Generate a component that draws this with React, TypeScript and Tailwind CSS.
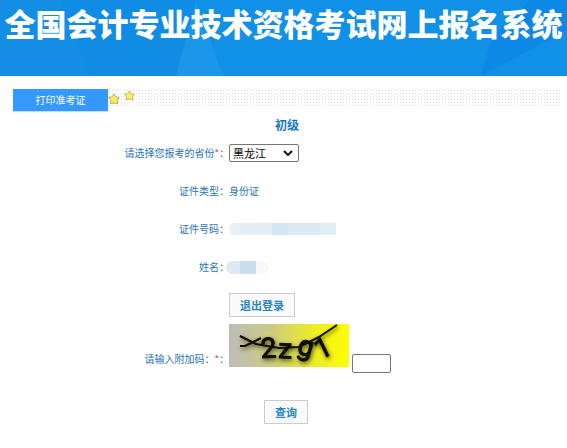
// src/App.tsx
import { useState } from 'react'
import type { ReactNode } from 'react'

interface FormRowProps {
  label: string
  htmlFor?: string
  required?: boolean
  children: ReactNode
}

function FormRow({ label, htmlFor, required = false, children }: FormRowProps) {
  return (
    <div className="flex h-[38px] items-center">
      <label htmlFor={htmlFor} className="w-[40.4%] shrink-0 text-right whitespace-nowrap">
        {label}
        {required && <span className="text-[#f04040]">*</span>}：
      </label>
      {children}
    </div>
  )
}

function Star({ className }: { className: string }) {
  return (
    <svg viewBox="0 0 12 12" className={className} aria-hidden="true">
      <path
        d="M6 1 L7.8 3.8 L11.2 4.6 L9.3 7.4 L9.6 11 L6 9.9 L2.4 11 L2.7 7.4 L0.8 4.6 L4.2 3.8 Z"
        fill="#faee58"
        stroke="#b9b272"
        strokeWidth="1"
        strokeLinejoin="round"
      />
    </svg>
  )
}

function Banner() {
  return (
    <header className="relative h-[76px] bg-[#1190e7]">
      <svg
        className="absolute inset-0 h-full w-full"
        viewBox="0 0 567 76"
        preserveAspectRatio="none"
        aria-hidden="true"
      >
        <path d="M0 0 H60 L90 76 H0 Z" fill="#148ee4" />
        <path d="M60 0 H196 L176 76 H90 Z" fill="#118ce4" />
        <path d="M196 0 L176 76 H223 Z" fill="#1a97e8" />
        <path d="M567 0 H530 L492 38 L481 76 L567 30 Z" fill="#0d88e5" />
      </svg>
      <h1 className="relative text-center text-[31px] leading-[46px] font-black whitespace-nowrap text-white">
        全国会计专业技术资格考试网上报名系统
      </h1>
    </header>
  )
}

function Captcha() {
  return (
    <svg viewBox="0 0 120 43" className="h-[43px] w-[120px] shrink-0 overflow-visible" role="img" aria-label="附加码">
      <defs>
        <linearGradient id="captchaBg">
          <stop offset="0" stopColor="#bdbdb9" />
          <stop offset="0.35" stopColor="#cdcb82" />
          <stop offset="0.7" stopColor="#ecec28" />
          <stop offset="1" stopColor="#ffff00" />
        </linearGradient>
        <filter id="captchaShadow" x="-20%" y="-20%" width="140%" height="140%">
          <feDropShadow dx="1" dy="2" stdDeviation="2" floodColor="#303000" floodOpacity="0.8" />
        </filter>
      </defs>
      <rect width="120" height="43" fill="url(#captchaBg)" />
      <g filter="url(#captchaShadow)">
        <text
          x="32 49 67 91"
          y="34 34 29 36"
          rotate="-2 2 16 -26"
          className="font-['Roboto'] text-[28px]"
          fill="#080800"
          stroke="#080800"
          strokeWidth="1"
        >
          2zg1
        </text>
        <path
          d="M11 12 L27 20 L50 24 L70 23 L90 13 L108 1 M11 22 L16 22 L32 14"
          fill="none"
          stroke="#080800"
          strokeWidth="2"
          strokeLinejoin="round"
        />
      </g>
    </svg>
  )
}

export default function App() {
  const [province, setProvince] = useState('黑龙江')
  const [code, setCode] = useState('')

  return (
    <div className="bg-white font-['Noto_Sans_CJK_SC',sans-serif] text-[10px] leading-[16px] text-[#2874b8]">
      <Banner />

      {/* Tab strip */}
      <nav className="mt-[13px] mr-[7px] ml-[13px] flex h-[22px]">
        <button
          type="button"
          className="h-[22px] w-[95px] bg-[#3399ff] text-[10px] text-white shadow-[0_1px_1px_#c8dcec]"
        >
          打印准考证
        </button>
        <div className="flex h-[17px] flex-1 items-start bg-[radial-gradient(circle,#dcdcdc_1px,transparent_1px)] bg-[size:3px_3px]">
          <Star className="mt-1 h-3 w-3" />
          <Star className="mt-px ml-1 h-[11px] w-[11px]" />
        </div>
      </nav>

      <form onSubmit={(e) => e.preventDefault()}>
        <h2 className="mt-[5px] pl-[7px] text-center text-[12px] leading-[18px] font-bold text-[#1877bd]">初级</h2>

        <FormRow label="请选择您报考的省份" htmlFor="province" required>
          <div className="relative">
            <select
              id="province"
              value={province}
              onChange={(e) => setProvince(e.target.value)}
              className="block h-[18px] w-[70px] appearance-none rounded-[2px] border border-[#767676] bg-white pl-[3px] text-[11px] leading-[16px] text-black"
            >
              <option>黑龙江</option>
              <option>吉林</option>
              <option>辽宁</option>
            </select>
            <svg
              viewBox="0 0 10 6"
              className="pointer-events-none absolute top-[6px] right-[6px] h-[6px] w-[10px]"
              aria-hidden="true"
            >
              <path d="M1 1 L5 5 L9 1" fill="none" stroke="#111" strokeWidth="2" />
            </svg>
          </div>
        </FormRow>

        <FormRow label="证件类型">
          <span>身份证</span>
        </FormRow>

        {/* Masked personal data */}
        <FormRow label="证件号码">
          <div className="flex h-3 overflow-hidden rounded-l-full">
            <span className="w-[11px] bg-[#e9f1f6]" />
            <span className="w-8 bg-[#e2edf5]" />
            <span className="w-4 bg-[#d3e6f3]" />
            <span className="w-8 bg-[#dceaf4]" />
            <span className="w-4 bg-[#e0eef6]" />
          </div>
        </FormRow>

        <FormRow label="姓名">
          <div className="-ml-[3px] flex h-[13px] overflow-hidden rounded-full">
            <span className="w-[14px] bg-[#dde9f3]" />
            <span className="w-4 bg-[#c8deee]" />
            <span className="w-[13px] bg-[#f5f9fc]" />
          </div>
        </FormRow>

        <div className="mt-[7px] pl-[40.4%]">
          <button
            type="button"
            className="block h-6 w-[66px] border border-[#cccccc] bg-[#fafafa] text-[11px] leading-[16px] font-bold text-[#2484bb]"
          >
            退出登录
          </button>
        </div>

        <div className="mt-[7px] flex items-end">
          <label htmlFor="code" className="w-[40.4%] shrink-0 text-right whitespace-nowrap">
            请输入附加码：<span className="text-[#f04040]">*</span>：
          </label>
          <Captcha />
          <input
            id="code"
            type="text"
            value={code}
            onChange={(e) => setCode(e.target.value)}
            className="-mb-[6px] ml-[3px] h-[19px] w-[39px] rounded-[2px] border border-[#767676] bg-white px-1 text-[11px] text-black"
          />
        </div>

        <div className="mt-[33px] flex justify-center pl-[5px]">
          <button
            type="submit"
            className="h-6 w-[44px] border border-[#cccccc] bg-[#fafafa] text-[11px] leading-[16px] font-bold text-[#2484bb]"
          >
            查询
          </button>
        </div>
      </form>
    </div>
  )
}
